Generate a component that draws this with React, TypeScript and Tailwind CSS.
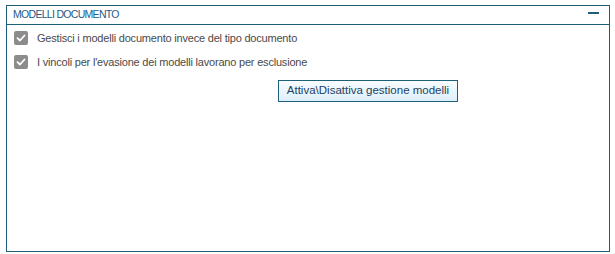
import React from "react";

const Check: React.FC<{ label: string }> = ({ label }) => (
  <div className="flex items-center h-[24px]">
    <span className="ml-[7px] flex h-[14px] w-[14px] items-center justify-center rounded-[2px] bg-[#8c8c8c]">
      <svg width="10" height="10" viewBox="0 0 10 10">
        <path d="M1.5 5.2 L4 7.5 L8.5 2.5" fill="none" stroke="#ffffff" strokeWidth="1.8" strokeLinecap="round" strokeLinejoin="round" />
      </svg>
    </span>
    <span className="ml-[9px] text-[11px] tracking-[-0.2px] text-[#4a4a4a]">{label}</span>
  </div>
);

export default function App() {
  return (
    <div className="h-[254px] w-[615px] bg-white pt-[5px] pl-[6px] font-['Liberation_Sans',sans-serif]">
      <div className="flex h-[247px] w-[604px] flex-col border border-[#1f5f7a]">
        <div className="flex h-[19px] items-center justify-between border-b border-[#1f5f7a] pl-[6px] pr-[10px]">
          <span className="text-[10.5px] tracking-[-0.7px] text-[#1f5a85]">MODELLI DOCUMENTO</span>
          <span className="mt-[-4px] block h-[2px] w-[11px] bg-[#1f5f7a]"></span>
        </div>
        <div className="pt-[1px]">
          <Check label="Gestisci i modelli documento invece del tipo documento" />
          <Check label="I vincoli per l'evasione dei modelli lavorano per esclusione" />
        </div>
        <div className="mt-[6px] flex pl-[271px]">
          <button className="h-[22px] w-[180px] border border-[#1f5f7a] bg-gradient-to-b from-[#f8fcff] to-[#dcefFC] text-[11.5px] text-[#1f3f60]">
            Attiva\Disattiva gestione modelli
          </button>
        </div>
      </div>
    </div>
  );
}
